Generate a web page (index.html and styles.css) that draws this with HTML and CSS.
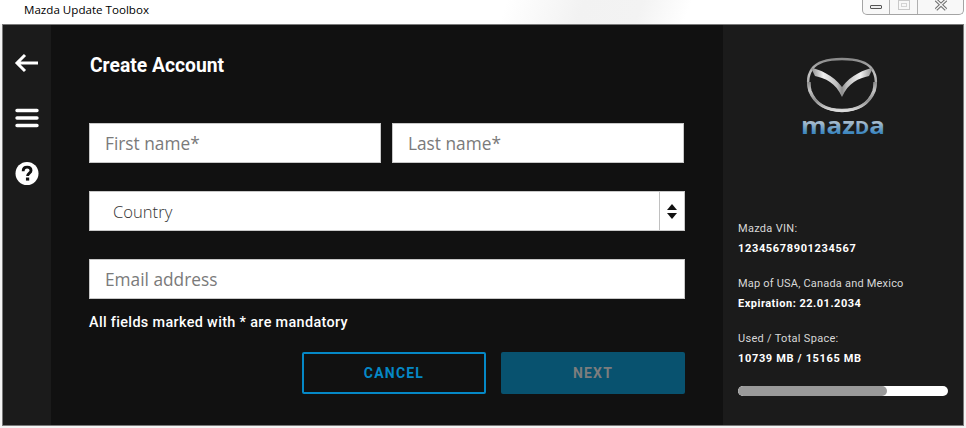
FILE: index.html
```html
<!DOCTYPE html>
<html lang="en">
<head>
    <meta charset="UTF-8">
    <meta name="viewport" content="width=device-width, initial-scale=1.0">
    <title>Mazda Update Toolbox</title>
    <link rel="stylesheet" href="styles.css">
</head>
<body>

<header class="titlebar">
    <span class="titlebar-name">Mazda Update Toolbox</span>
    <div class="window-controls">
        <div class="window-btn btn-min"><span class="min-glyph"></span></div>
        <div class="window-btn btn-max"><span class="max-glyph"></span></div>
        <div class="window-btn btn-close">
            <svg width="14" height="12" viewBox="0 0 14 12">
                <path d="M2 0 L12 9.5 M12 0 L2 9.5" stroke="#6d6d6d" stroke-width="3.4" fill="none"/>
                <path d="M2 0 L12 9.5 M12 0 L2 9.5" stroke="#f4f4f4" stroke-width="1.4" fill="none"/>
            </svg>
        </div>
    </div>
</header>

<div class="app">
    <nav class="rail">
        <svg class="rail-icon" width="26" height="22" viewBox="0 0 26 22">
            <path d="M11 3 L3 11 L11 19 M3 11 H24" stroke="#fff" stroke-width="3" fill="none"/>
        </svg>
        <svg class="rail-icon" width="26" height="22" viewBox="0 0 26 22">
            <path d="M3 3.5 H23 M3 11 H23 M3 18.5 H23" stroke="#fff" stroke-width="3.4" stroke-linecap="round" fill="none"/>
        </svg>
        <svg class="rail-icon" width="24" height="23" viewBox="0 0 24 24">
            <circle cx="12" cy="12" r="12" fill="#fff"/>
            <path d="M8 9.6 C8 6.8 10 5.4 12.2 5.4 C14.6 5.4 16.2 6.9 16.2 8.9 C16.2 11.6 12.6 11.7 12.6 14.6" stroke="#111" stroke-width="3" fill="none"/>
            <rect x="10.9" y="16.2" width="3.4" height="3.2" fill="#111"/>
        </svg>
    </nav>

    <main class="content">
        <h1 class="page-title">Create Account</h1>
        <form class="account-form">
            <div class="form-row name-row">
                <div class="field placeholder">First name*</div>
                <div class="field placeholder">Last name*</div>
            </div>
            <div class="field select-field">
                <span class="select-value">Country</span>
                <span class="select-arrows">
                    <span class="arrow-up"></span>
                    <span class="arrow-down"></span>
                </span>
            </div>
            <div class="field placeholder">Email address</div>
        </form>
        <p class="form-note">All fields marked with * are mandatory</p>
        <div class="form-actions">
            <div class="btn btn-cancel">CANCEL</div>
            <div class="btn btn-next">NEXT</div>
        </div>
    </main>

    <aside class="sidebar">
        <div class="logo">
            <svg width="74" height="58" viewBox="0 0 74 58">
                <defs>
                    <linearGradient id="chrome" x1="0" y1="0" x2="0" y2="1">
                        <stop offset="0" stop-color="#8a8a8a"/>
                        <stop offset="0.3" stop-color="#c4c4c4"/>
                        <stop offset="0.65" stop-color="#8f8f8f"/>
                        <stop offset="1" stop-color="#dadada"/>
                    </linearGradient>
                    <linearGradient id="wing" x1="0" y1="0" x2="1" y2="0">
                        <stop offset="0" stop-color="#8a8a8a"/>
                        <stop offset="0.2" stop-color="#f0f0f0"/>
                        <stop offset="0.42" stop-color="#bdbdbd"/>
                        <stop offset="0.5" stop-color="#8c8c8c"/>
                        <stop offset="0.58" stop-color="#bdbdbd"/>
                        <stop offset="0.8" stop-color="#f0f0f0"/>
                        <stop offset="1" stop-color="#8a8a8a"/>
                    </linearGradient>
                </defs>
                <path d="M37 3 C52 3 62 6 67 13 C71 19 72 27 69 35 C64 48 52 54.5 37 54.5 C22 54.5 10 48 5 35 C2 27 3 19 7 13 C12 6 22 3 37 3 Z" fill="none" stroke="url(#chrome)" stroke-width="2.4"/>
                <path d="M4 26 C4 30 4 32 5 35 C10 48 22 54.5 37 54.5 C52 54.5 64 48 69 35 C70 32 70 30 70 26" fill="none" stroke="url(#chrome)" stroke-width="3.4"/>
                <path d="M6 12 C14 13 28 19 37 31 C46 19 60 13 68 12 L64 20 C54 22 43 27 37 41 C31 27 20 22 10 20 Z" fill="url(#wing)"/>
            </svg>
            <svg class="wordmark" width="90" height="36" viewBox="0 0 90 36">
                <defs>
                    <linearGradient id="wordblue" x1="0" y1="0" x2="0" y2="1">
                        <stop offset="0.45" stop-color="#a3b9cc"/>
                        <stop offset="0.75" stop-color="#3f88c0"/>
                    </linearGradient>
                </defs>
                <text x="4" y="27" textLength="84" lengthAdjust="spacingAndGlyphs" fill="url(#wordblue)">maz<tspan class="wordmark-cap">D</tspan>a</text>
            </svg>
        </div>
        <div class="info">
            <div class="info-block">
                <div class="info-label">Mazda VIN:</div>
                <div class="info-value value-vin">12345678901234567</div>
            </div>
            <div class="info-block">
                <div class="info-label label-map">Map of USA, Canada and Mexico</div>
                <div class="info-value">Expiration: 22.01.2034</div>
            </div>
            <div class="info-block">
                <div class="info-label">Used / Total Space:</div>
                <div class="info-value value-vin">10739 MB / 15165 MB</div>
            </div>
            <div class="usage-bar">
                <div class="usage-fill" style="width: 71%"></div>
            </div>
        </div>
    </aside>
</div>

</body>
</html>
```

FILE: styles.css
```css
body {
    margin: 0;
    height: 428px;
    overflow: hidden;
    background: #f4f4f4;
    font-family: 'Roboto', sans-serif;
    display: flex;
    flex-direction: column;
}
.titlebar {
    height: 24px;
    flex: none;
    display: flex;
    justify-content: space-between;
    align-items: flex-start;
    padding: 0 2px 0 24px;
    background: linear-gradient(110deg, #fff 0%, #fff 52%, #f2f2f2 60%, #f3f3f3 66%, #fff 71%, #fff 100%);
}
.titlebar-name {
    font-family: 'Open Sans', sans-serif;
    font-size: 11.6px;
    line-height: 20px;
    color: #000;
}
.window-controls {
    display: flex;
    height: 14px;
    border: 1px solid #a4a4a4;
    border-top: none;
    border-radius: 0 0 5px 5px;
    background: #f8f8f8;
}
.window-btn {
    display: flex;
    justify-content: center;
    align-items: flex-start;
    box-sizing: border-box;
}
.btn-min {
    width: 27px;
    border-right: 1px solid #b0b0b0;
}
.btn-max {
    width: 28px;
    border-right: 1px solid #b0b0b0;
}
.btn-close {
    width: 45px;
}
.min-glyph {
    width: 10px;
    height: 2px;
    margin-top: 5px;
    border: 1px solid #555;
    border-radius: 1px;
    background: #eee;
}
.max-glyph {
    width: 10px;
    height: 8px;
    border: 1px solid #c9c9c9;
    box-shadow: inset 0 0 0 2px #f8f8f8, inset 0 0 0 3px #d4d4d4;
}
.btn-close svg {
    display: block;
}
.app {
    flex: none;
    height: 402px;
    margin: 0 2px;
    box-sizing: border-box;
    border: 1px solid #7a7a7a;
    display: flex;
    background: #111;
}
.rail {
    width: 48px;
    flex: none;
    box-sizing: border-box;
    padding-top: 27px;
    display: flex;
    flex-direction: column;
    align-items: center;
    gap: 33px;
    background: #1b1b1b;
}
.rail-icon {
    display: block;
}
.content {
    flex: 1;
    box-sizing: border-box;
    padding: 27px 38px 0 38px;
    color: #fff;
}
.page-title {
    margin: 0 0 43px 1px;
    font-size: 19.3px;
    line-height: 28px;
    font-weight: 700;
}
.account-form {
    display: flex;
    flex-direction: column;
    gap: 28px;
}
.form-row {
    display: flex;
    gap: 11px;
}
.name-row {
    width: 595px;
}
.name-row .field {
    flex: 1;
}
.field {
    height: 40px;
    box-sizing: border-box;
    border: 1px solid #c8c8c8;
    background: #fff;
    font-family: 'Open Sans', sans-serif;
    font-size: 17.3px;
    line-height: 40px;
    padding-left: 15px;
}
.placeholder {
    color: #7a7a7a;
}
.select-field {
    display: flex;
    justify-content: space-between;
    padding-left: 23px;
    color: #333;
    font-size: 16.6px;
    font-weight: 300;
}
.select-arrows {
    width: 24px;
    border-left: 1px solid #c0c0c0;
    display: flex;
    flex-direction: column;
    align-items: center;
    justify-content: center;
    gap: 3px;
}
.arrow-up {
    border-left: 5px solid transparent;
    border-right: 5px solid transparent;
    border-bottom: 6px solid #111;
}
.arrow-down {
    border-left: 5px solid transparent;
    border-right: 5px solid transparent;
    border-top: 6px solid #111;
}
.form-note {
    margin: 15px 0 0;
    font-size: 14.4px;
    line-height: 18px;
    font-weight: 500;
    letter-spacing: 0.35px;
}
.form-actions {
    display: flex;
    justify-content: flex-end;
    gap: 15px;
    margin-top: 20px;
}
.btn {
    width: 184px;
    height: 42px;
    box-sizing: border-box;
    border-radius: 2px;
    display: flex;
    align-items: center;
    justify-content: center;
    font-size: 14px;
    font-weight: 700;
    letter-spacing: 1.2px;
}
.btn-cancel {
    border: 2px solid #0588c6;
    color: #0588c6;
}
.btn-next {
    background: #08526f;
    color: #7d7d7d;
}
.sidebar {
    width: 240px;
    flex: none;
    box-sizing: border-box;
    padding: 31px 15px 0 15px;
    background: #1b1b1b;
    color: #fff;
}
.logo {
    display: flex;
    flex-direction: column;
    align-items: center;
    margin-left: -2px;
    margin-bottom: 78px;
}
.logo svg {
    display: block;
}
.wordmark {
    margin-top: -7px;
    font-family: 'Open Sans', sans-serif;
    font-size: 24px;
    font-weight: 700;
}
.wordmark-cap {
    font-size: 18px;
}
.info {
    font-size: 11px;
    line-height: 15px;
}
.info-block {
    margin-bottom: 20px;
}
.info-label {
    color: #d8d8d8;
    margin-bottom: 5px;
    letter-spacing: 0.3px;
}
.label-map {
    letter-spacing: 0.2px;
}
.info-value {
    font-weight: 700;
    letter-spacing: 0.5px;
}
.value-vin {
    letter-spacing: 0.65px;
}
.usage-bar {
    height: 10px;
    width: 210px;
    margin-top: 20px;
    border-radius: 5px;
    background: #fff;
    overflow: hidden;
}
.usage-fill {
    height: 100%;
    border-radius: 5px;
    background: #9a9a9a;
}
```
